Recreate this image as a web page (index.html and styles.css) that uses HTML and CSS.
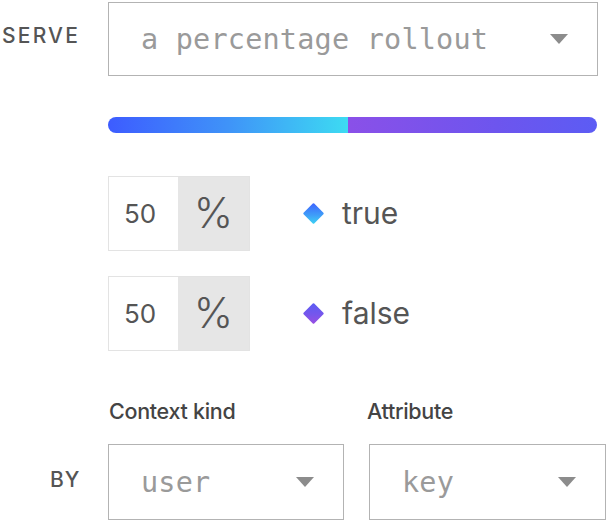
FILE: index.html
```html
<!DOCTYPE html>
<html>
<head>
<meta charset="utf-8">
<link rel="stylesheet" href="styles.css">
</head>
<body>
<div class="page">
  <div class="row serve-row">
    <div class="label">SERVE</div>
    <div class="select select-wide">
      <span class="select-text">a percentage rollout</span>
      <span class="caret"></span>
    </div>
  </div>

  <div class="row bar-row">
    <div class="label"></div>
    <div class="bar">
      <div class="bar-seg seg-true" style="width: 49%"></div>
      <div class="bar-seg seg-false" style="width: 51%"></div>
    </div>
  </div>

  <div class="row pct-row first">
    <div class="label"></div>
    <div class="pct">
      <div class="pct-input">50</div>
      <div class="pct-addon">%</div>
    </div>
    <div class="variation">
      <span class="diamond diamond-true"></span>
      <span class="var-name">true</span>
    </div>
  </div>

  <div class="row pct-row second">
    <div class="label"></div>
    <div class="pct">
      <div class="pct-input">50</div>
      <div class="pct-addon">%</div>
    </div>
    <div class="variation">
      <span class="diamond diamond-false"></span>
      <span class="var-name">false</span>
    </div>
  </div>

  <div class="row field-labels">
    <div class="label"></div>
    <div class="field-label kind-label">Context kind</div>
    <div class="field-label attr-label">Attribute</div>
  </div>

  <div class="row by-row">
    <div class="label by">BY</div>
    <div class="select select-kind">
      <span class="select-text">user</span>
      <span class="caret"></span>
    </div>
    <div class="select select-attr">
      <span class="select-text">key</span>
      <span class="caret"></span>
    </div>
  </div>
</div>
</body>
</html>
```

FILE: styles.css
```css
html, body {
  margin: 0;
  padding: 0;
  background: #ffffff;
}

.page {
  width: 606px;
  height: 520px;
  display: flex;
  flex-direction: column;
  font-family: Inter, "Liberation Sans", sans-serif;
  color: #555555;
  overflow: hidden;
}

.row {
  display: flex;
  align-items: center;
}

.label {
  width: 108px;
  flex: 0 0 108px;
  box-sizing: border-box;
  padding-left: 2px;
  font-size: 21px;
  font-weight: 500;
  letter-spacing: 2.2px;
  color: #555555;
}

.label.by {
  padding-left: 50px;
  letter-spacing: 1px;
}

.serve-row {
  margin-top: 2px;
}

.serve-row .label {
  margin-top: -7px;
}

.select {
  box-sizing: border-box;
  height: 74px;
  border: 1px solid #b3b3b3;
  display: flex;
  align-items: center;
  justify-content: space-between;
  padding-left: 32px;
  padding-right: 29px;
  background: #ffffff;
}

.select-wide {
  width: 490px;
}

.select-text {
  font-family: "DejaVu Sans Mono", "Liberation Mono", monospace;
  font-size: 28.5px;
  color: #9a9a9a;
  letter-spacing: 0.2px;
  margin-top: 1px;
}

.caret {
  width: 0;
  height: 0;
  border-left: 9px solid transparent;
  border-right: 9px solid transparent;
  border-top: 10px solid #8c8c8c;
}

.bar-row {
  margin-top: 41px;
}

.bar {
  width: 489px;
  height: 16px;
  border-radius: 8px;
  overflow: hidden;
  display: flex;
}

.bar-seg {
  height: 100%;
}

.seg-true {
  background: linear-gradient(90deg, #3d5cff 0%, #3f93f8 50%, #3ddbf2 100%);
}

.seg-false {
  background: linear-gradient(90deg, #8a50e8 0%, #6d55ee 60%, #5c5cf4 100%);
}

.pct-row.first {
  margin-top: 43px;
}

.pct-row.second {
  margin-top: 25px;
}

.pct {
  display: flex;
  height: 75px;
  box-sizing: border-box;
  border: 1px solid #e3e3e3;
}

.pct-input {
  width: 69px;
  box-sizing: border-box;
  display: flex;
  align-items: center;
  padding-left: 15px;
  font-size: 26px;
  color: #555555;
  background: #ffffff;
}

.pct-addon {
  width: 71px;
  display: flex;
  align-items: center;
  justify-content: center;
  background: #e6e6e6;
  font-size: 42px;
  font-weight: 300;
  color: #555555;
  padding-bottom: 2px;
  box-sizing: border-box;
}

.variation {
  display: flex;
  align-items: center;
  margin-left: 56px;
}

.diamond {
  width: 15px;
  height: 15px;
  transform: rotate(45deg);
  border-radius: 1px;
  flex: 0 0 15px;
}

.diamond-true {
  background: linear-gradient(135deg, #3d63ff 0%, #3fa0f8 60%, #3dd4f4 100%);
}

.diamond-false {
  background: linear-gradient(135deg, #5a5cf4 0%, #7656ec 55%, #9a4fe2 100%);
}

.var-name {
  margin-left: 21px;
  font-size: 30px;
  color: #555555;
  margin-top: -2px;
}

.field-labels {
  margin-top: 46px;
  height: 28px;
}

.field-label {
  font-size: 21.5px;
  font-weight: 500;
  color: #444444;
  letter-spacing: -0.3px;
}

.kind-label {
  width: 258px;
  padding-left: 1px;
}

.by-row {
  margin-top: 19px;
}

.by-row .label {
  margin-top: -6px;
}

.select-kind {
  width: 236px;
  height: 76px;
}

.select-attr {
  width: 237px;
  height: 76px;
  margin-left: 25px;
}
```
